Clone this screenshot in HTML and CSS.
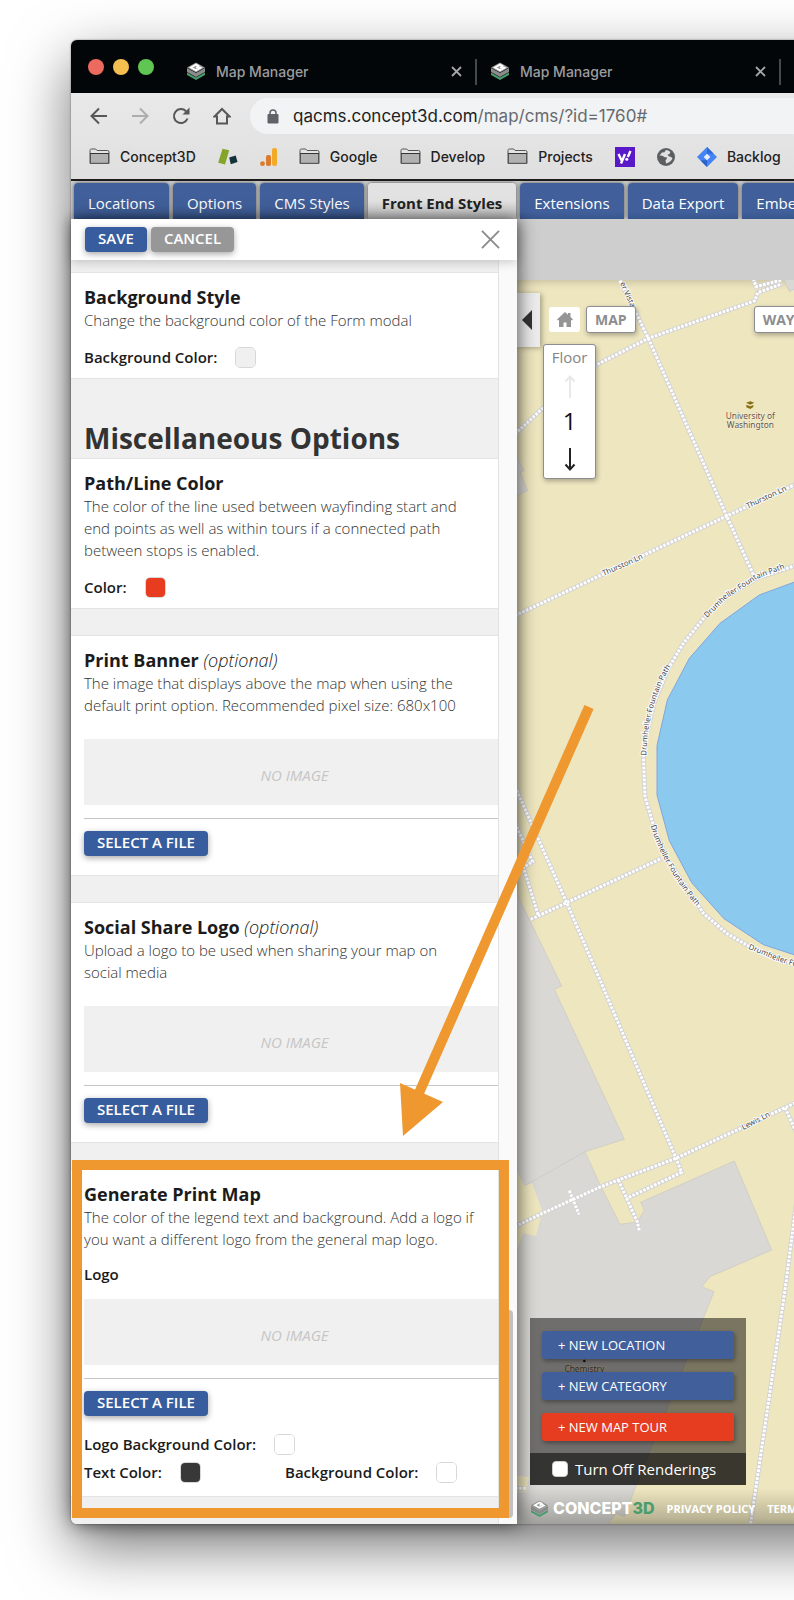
FILE: index.html
```html
<!DOCTYPE html>
<html lang="en">
<head>
<meta charset="utf-8">
<title>Map Manager</title>
<link rel="stylesheet" href="styles.css">
</head>
<body>
<svg class="defs" aria-hidden="true">
  <symbol id="stack" viewBox="0 0 20 18">
    <path d="M1 10.500l9 5 9-5v2.500l-9 5-9-5z" fill="#4a9c6d"/>
    <path d="M1 6l9 5 9-5v4l-9 5-9-5z" fill="#8a8c8c"/>
    <path d="M10 0.500l9 5-9 5-9-5z" fill="#8f9191"/>
    <path d="M13.200 4.400L10 2.700 5 5.500 10 8.300l4.500-2.500-2.300-1.200-2.200 1.200" fill="none" stroke="#fff" stroke-width="1.900"/>
  </symbol>
  <symbol id="cross" viewBox="0 0 20 20">
    <path d="M1 1l18 18M19 1L1 19" fill="none" stroke="currentColor" stroke-width="2"/>
  </symbol>
  <symbol id="cross-bold" viewBox="0 0 11 11">
    <path d="M1 1l9 9M10 1l-9 9" fill="none" stroke="currentColor" stroke-width="1.800"/>
  </symbol>
  <symbol id="folder" viewBox="0 0 21 17">
    <path d="M1 5V2.500q0-1.500 1.500-1.500h4.200l1.300 1.500h10.500q1.500 0 1.500 1.500v11.500H1z" fill="#e4e4e4" stroke="#555" stroke-width="1"/>
    <path d="M1.500 5.500h18v9.800h-18z" fill="#b1b1b1" stroke="#555" stroke-width="1"/>
    <path d="M1 5.500h19" stroke="#333" stroke-width="1"/>
  </symbol>
</svg>
<div class="desktop">
<div class="window">
  <header class="titlebar">
    <div class="lights"><span class="light red"></span><span class="light yellow"></span><span class="light green"></span></div>
    <div class="page-tab"><svg class="favicon"><use href="#stack"/></svg><span class="page-name">Map Manager</span><button class="tab-close" aria-label="Close tab"><svg class="tab-x"><use href="#cross-bold"/></svg></button></div>
    <div class="page-tab"><svg class="favicon"><use href="#stack"/></svg><span class="page-name">Map Manager</span><button class="tab-close" aria-label="Close tab"><svg class="tab-x"><use href="#cross-bold"/></svg></button></div>
  </header>
  <div class="chrome">
    <div class="toolbar">
      <button class="tool" aria-label="Back"><svg viewBox="0 0 18 18"><path d="M17 9H2M9 1.500L1.500 9 9 16.500" fill="none" stroke="#555759" stroke-width="2"/></svg></button>
      <button class="tool" aria-label="Forward"><svg viewBox="0 0 18 18"><path d="M1 9h15M9 1.500L16.500 9 9 16.500" fill="none" stroke="#acadae" stroke-width="2"/></svg></button>
      <button class="tool" aria-label="Reload"><svg viewBox="0 0 18 18"><path d="M15.500 11.500A7 7 0 1 1 14 4.200" fill="none" stroke="#555759" stroke-width="2"/><path d="M17.500 0.500v7h-7z" fill="#555759"/></svg></button>
      <button class="tool" aria-label="Home"><svg viewBox="0 0 18 18"><path d="M1.500 9.500L9 2l7.500 7.500H14V16.500H4V9.500z" fill="none" stroke="#555759" stroke-width="2"/></svg></button>
      <div class="address" role="textbox" aria-label="Address">
        <svg class="lock" viewBox="0 0 12 15"><path d="M1 5.500h10V14H1z" fill="#5f6368" stroke="#5f6368" stroke-linejoin="round"/><path d="M3 6V4a3 3 0 0 1 6 0v2" fill="none" stroke="#5f6368" stroke-width="1.500"/></svg>
        <span>qacms.concept3d.com<span class="url-path">/map/cms/?id=1760#</span></span>
      </div>
    </div>
    <nav class="bookmarks" aria-label="Bookmarks">
      <a class="bookmark" href="#"><svg class="folder"><use href="#folder"/></svg>Concept3D</a>
      <a class="bookmark" href="#" aria-label="Blocks"><svg width="20" height="18" viewBox="0 0 20 18"><path d="M4.500 0.700l6.700 1.600L7 16.500 0.200 14.800z" fill="#84a52a"/><path d="M11.200 9.600l6.500-2.200L19.500 14l-6.700 2.200z" fill="#14323c"/></svg></a>
      <a class="bookmark" href="#" aria-label="Analytics"><svg width="17" height="20" viewBox="0 0 17 20"><rect x="12" y="1" width="5" height="18" rx="2" fill="#f2ab28"/><rect x="6" y="8" width="5" height="11" rx="2" fill="#db7b2b"/><circle cx="2.500" cy="16.700" r="2.400" fill="#db7b2b"/></svg></a>
      <a class="bookmark" href="#"><svg class="folder"><use href="#folder"/></svg>Google</a>
      <a class="bookmark" href="#"><svg class="folder"><use href="#folder"/></svg>Develop</a>
      <a class="bookmark" href="#"><svg class="folder"><use href="#folder"/></svg>Projects</a>
      <a class="bookmark" href="#" aria-label="Yahoo"><svg width="20" height="20" viewBox="0 0 20 20"><path d="M0 0h20v20H0z" fill="#5a19c9"/><path d="M3.500 7l3 6.200M10 7l-4 9.500M15.500 4l-2.700 6" fill="none" stroke="#fff" stroke-width="2.400"/><circle cx="11.800" cy="12.300" r="1.500" fill="#fff"/></svg></a>
      <a class="bookmark" href="#" aria-label="Globe"><svg width="18" height="18" viewBox="0 0 18 18"><circle cx="9" cy="9" r="9" fill="#5c5f61"/><path d="M10 2q-2 0-2.500 2.200L5 4.500 2.500 7.500q4-.500 4.500 1.500l3 .500q0 2-1.500 2.500l.500 3.500q4.500-1 6.500-5-1.500-2.500-3.500-2l-1.500-2q3.500-.500 2.500-3z" fill="#e1e1e1"/></svg></a>
      <a class="bookmark" href="#"><svg width="20" height="20" viewBox="0 0 20 20"><path d="M10 0l10 10-10 10L0 10z" fill="#4584f5"/><path d="M10 13.300V20l-6.500-6.500z" fill="#2a62c9"/><path d="M10 6.800V0l6.500 6.500z" fill="#2f6bd6"/><path d="M10 6.700l3.300 3.300-3.300 3.300L6.700 10z" fill="#e9effa"/></svg>Backlog</a>
    </nav>
  </div>
  <nav class="sections" aria-label="Sections">
    <button class="section-tab">Locations</button>
    <button class="section-tab">Options</button>
    <button class="section-tab">CMS Styles</button>
    <button class="section-tab active">Front End Styles</button>
    <button class="section-tab">Extensions</button>
    <button class="section-tab">Data Export</button>
    <button class="section-tab">Embed</button>
  </nav>
  <div class="workspace">
    <main class="panel">
      <div class="panel-head">
        <button class="btn">SAVE</button>
        <button class="btn gray">CANCEL</button>
        <button class="panel-close" aria-label="Close panel"><svg><use href="#cross"/></svg></button>
      </div>
      <div class="panel-body">
        <div class="options">
          <section class="card">
            <h3>Background Style</h3>
            <p>Change the background color of the Form modal</p>
            <div class="field first"><label for="c1">Background Color:</label><input id="c1" type="color" value="#f0f0f0"></div>
          </section>
          <h2>Miscellaneous Options</h2>
          <section class="card">
            <h3>Path/Line Color</h3>
            <p>The color of the line used between wayfinding start and end points as well as within tours if a connected path between stops is enabled.</p>
            <div class="field first"><label for="c2">Color:</label><input id="c2" type="color" value="#e73c1f"></div>
          </section>
          <section class="card upload">
            <h3>Print Banner <em>(optional)</em></h3>
            <p>The image that displays above the map when using the default print option. Recommended pixel size: 680x100</p>
            <div class="preview">NO IMAGE</div>
            <hr>
            <button class="btn">SELECT A FILE</button>
          </section>
          <section class="card upload">
            <h3>Social Share Logo <em>(optional)</em></h3>
            <p>Upload a logo to be used when sharing your map on social media</p>
            <div class="preview">NO IMAGE</div>
            <hr>
            <button class="btn">SELECT A FILE</button>
          </section>
          <section class="card print">
            <h3>Generate Print Map</h3>
            <p>The color of the legend text and background. Add a logo if you want a different logo from the general map logo.</p>
            <h4>Logo</h4>
            <div class="preview">NO IMAGE</div>
            <hr>
            <button class="btn">SELECT A FILE</button>
            <div class="field after"><label for="c3">Logo Background Color:</label><input id="c3" type="color" value="#ffffff"></div>
            <div class="pair">
              <div class="field"><label for="c4">Text Color:</label><input id="c4" type="color" value="#383838"></div>
              <div class="field"><label for="c5">Background Color:</label><input id="c5" type="color" value="#ffffff"></div>
            </div>
          </section>
        </div>
        <div class="gutter"><span class="thumb"></span></div>
      </div>
    </main>
    <div class="map-pane">
      <div class="map">
        <svg class="map-art" role="img" aria-label="Campus map">
          <defs>
            <path id="ring" d="M580 1085L650 1015 740 957 860 912"/>
            <path id="ring2" d="M409 1487Q412 1340 480 1222L510 1170"/>
            <path id="ring3" d="M422 1697Q455 1810 552 1930L600 1985"/>
            <path id="ring4" d="M714 2066L800 2102 900 2132 1200 2132"/>
            <g id="paths">
              <path d="M330 62L415 235 650 768 735 955"/>
              <path d="M15 522L98 445 258 315 415 235 735 122 743 98 815 72M730 55L738 80 815 60"/>
              <path d="M15 1067L650 768 870 667"/>
              <path d="M870 912L740 955 650 1010 585 1070 520 1150 475 1225 435 1320 410 1420 400 1490 405 1610 430 1695 470 1795 555 1920 580 1960 650 2020 715 2058 870 2122"/>
              <path d="M15 1580L170 1928 270 2160 498 2695 515 2737 350 2815"/>
              <path d="M15 1690L68 1805 40 1822 85 1967M62 1978L170 1928 455 1795"/>
              <path d="M15 2900L97 2860 273 2780 325 2760 498 2695 825 2543 870 2522M825 2543L860 2620"/>
              <path d="M325 2760L350 2815 382 2886 388 2912M178 2792L207 2863"/>
              <path d="M860 2820L825 3090 722 3790M15 3685h32"/>
            </g>
          </defs>
          <g transform="translate(-7 -20) scale(.33333)">
            <g fill="#d9d8d4" stroke="#c9c7c3" stroke-width="2">
              <path d="M0 1860L155 2178 133 2188 343 2638 225 2675 273 2780 330 2893 382 2886 403 2850 392 2827 673 2703 785 2970 600 3050 575 3080 612 3095 375 3685 343 3770 318 3760 288 3800H0z"/>
              <path d="M0 555L42 632 30 637 53 692 0 716zM820 55L838 95 870 80V55z"/>
              <path d="M225 2675L43 2778" fill="none"/>
            </g>
            <path d="M0 2690L43 2778 65 2768 97 2852 78 2928 40 2920 0 3020zM0 3642L57 3652 48 3695H0z" fill="#eee6bf"/>
            <path d="M870 960L748 1005 630 1090 538 1195 472 1320 441 1457 441 1605 478 1742 545 1868 642 1976 760 2054 870 2090z" fill="#8bcaee" stroke="#7fa6e0" stroke-width="3"/>
            <use href="#paths" class="path-bed"/>
            <use href="#paths" class="path-dash"/>
            <g class="streets">
              <text transform="translate(330 70) rotate(66)">er Vista</text>
              <text transform="translate(281 948) rotate(-24)">Thurston Ln</text>
              <text transform="translate(713 746) rotate(-25)">Thurston Ln</text>
              <text transform="translate(700 2610) rotate(-27)">Lewis Ln</text>
              <text><textPath href="#ring" startOffset="16">Drumheller Fountain Path</textPath></text>
              <text><textPath href="#ring2">Drumheller Fountain Path</textPath></text>
              <text><textPath href="#ring3">Drumheller Fountain Path</textPath></text>
              <text><textPath href="#ring4">Drumheller Fountain Path</textPath></text>
            </g>
            <g class="places">
              <path d="M708 428l13-4 12 4-12 6zM709 434l12 5 9-4v6l-9 6-12-5z" fill="#8a7014"/>
              <text x="721" y="476">University of</text>
              <text x="721" y="505">Washington</text>
              <circle cx="223" cy="3303" r="4" fill="#3a1c10"/>
              <text x="223" y="3336">Chemistry</text>
            </g>
          </g>
        </svg>
        <button class="toggle" aria-label="Collapse panel"><svg width="10" height="20"><path d="M10 0v20L0 10z" fill="#333"/></svg></button>
        <div class="map-tools">
          <button class="home" aria-label="Home view"><svg width="16" height="15" viewBox="0 0 16 15"><path d="M8 0l3 2.700V1h2.500v4L16 7.500l-1 1-1-.800V15H9.500v-4.500h-3V15H2V7.700l-1 .800-1-1z" fill="#959595"/></svg></button>
          <button class="map-btn">MAP</button>
          <button class="map-btn way">WAYFINDING</button>
        </div>
        <div class="floor">
          <span>Floor</span>
          <button class="floor-step" aria-label="Floor up"><svg width="12" height="23"><path d="M6 23V2M1.500 6.500L6 1.500l4.500 5" fill="none" stroke="#e8e8e8" stroke-width="2"/></svg></button>
          <span class="floor-no">1</span>
          <button class="floor-step" aria-label="Floor down"><svg width="12" height="23"><path d="M6 0v21M1.500 16.500l4.500 5 4.500-5" fill="none" stroke="#222" stroke-width="2"/></svg></button>
        </div>
        <div class="actions">
          <div class="action-list">
            <button class="action">+ NEW LOCATION</button>
            <button class="action">+ NEW CATEGORY</button>
            <button class="action tour">+ NEW MAP TOUR</button>
          </div>
          <div class="render"><input type="checkbox" id="render"><label for="render">Turn Off Renderings</label></div>
        </div>
        <footer class="map-foot">
          <svg class="foot-icon"><use href="#stack"/></svg><span class="brand">CONCEPT<span class="brand-3d">3D</span></span>
          <a href="#">PRIVACY POLICY</a><a href="#">TERMS</a>
        </footer>
      </div>
    </div>
  </div>
  <svg class="notes" aria-hidden="true">
    <rect x="6" y="1125" width="427" height="348" fill="none" stroke="#ee982f" stroke-width="10"/>
    <path d="M518 667L348 1053" stroke="#ee982f" stroke-width="10"/>
    <path d="M329 1043l43 19-40 34z" fill="#ee982f"/>
  </svg>
</div>
</div>
</body>
</html>
```
FILE: styles.css
```css
* { box-sizing: border-box; }
body { margin: 0; background: #fff; font-family: "Open Sans", sans-serif; font-size: 15px; color: #1b1b1b; }
button { font: inherit; border: 0; padding: 0; background: none; cursor: pointer; }
a { color: inherit; text-decoration: none; }
h2, h3, h4, p, hr { margin: 0; }
svg { display: block; flex: none; }
.defs { position: absolute; width: 0; height: 0; }

.desktop { overflow: hidden; padding: 40px 0 76px 71px; }
.window { position: relative; margin-right: -120px; border-radius: 6px; background: #cecece; box-shadow: 0 0 2px rgba(0,0,0,.5), 0 22px 60px rgba(0,0,0,.55); }

.titlebar { display: flex; height: 53px; padding: 9px 0 0 17px; background: #030608; border-radius: 6px 6px 0 0; overflow: hidden; }
.lights { display: flex; gap: 9px; align-items: center; height: 36px; margin-right: 32px; flex: none; }
.light { width: 16px; height: 16px; border-radius: 50%; }
.red { background: #ec6a5e; }
.yellow { background: #f5bf4f; }
.green { background: #61c554; }
.page-tab { display: flex; align-items: center; flex: none; width: 304px; height: 44px; padding: 0 14px 0 0; position: relative; color: #9b9d9f; font-family: Inter, sans-serif; font-size: 14px; font-weight: 500; }
.page-tab::after { content: ""; position: absolute; right: 13px; top: 10px; width: 2px; height: 26px; background: #46484a; }
.favicon { width: 20px; height: 18px; margin-right: 10px; }
.page-name { flex: 1; }
.tab-close { margin-right: 14px; color: #a5a7a8; }
.tab-x { width: 11px; height: 11px; }

.chrome { background: linear-gradient(#e9e9e9, #dfdfdf); border-bottom: 2px solid #1c1c1c; }
.toolbar { display: flex; align-items: center; padding: 5px 0 0 19px; }
.tool { width: 18px; height: 18px; margin-right: 23px; }
.tool svg { width: 18px; height: 18px; }
.address { flex: 1; display: flex; align-items: center; gap: 14px; height: 36px; margin-left: -5px; padding-left: 17px; border-radius: 18px 0 0 18px; background: #f1f3f5; font-family: Inter, sans-serif; font-size: 17px; color: #202124; white-space: nowrap; }
.tool:nth-child(4) { margin-right: 24px; }
.lock { width: 12px; height: 15px; }
.url-path { color: #66696d; }
.bookmarks { display: flex; align-items: center; gap: 22px; height: 45px; padding-left: 18px; font-family: Inter, sans-serif; font-size: 14px; font-weight: 500; color: #222; overflow: hidden; }
.bookmark { display: flex; align-items: center; gap: 10px; flex: none; }
.folder { width: 21px; height: 17px; }

.sections { display: flex; gap: 4px; padding: 2px 0 0 3px; overflow: hidden; background: #cecece; }
.section-tab { flex: none; height: 36px; padding: 4px 14px 0; color: #fff; font-weight: 500; border-radius: 4px 4px 0 0; background: linear-gradient(#41609b 80%, #38568d); box-shadow: 0 0 4px rgba(0,0,0,.6); }
.section-tab.active { color: #222; font-weight: 700; background: linear-gradient(#e2e2e2 50%, #c4c4c4); }

.workspace { display: flex; align-items: stretch; }
.panel { position: relative; z-index: 1; flex: none; width: 446px; background: #fff; border-radius: 0 0 0 6px; box-shadow: 2px 0 18px rgba(0,0,0,.6); }
.panel-head { position: relative; z-index: 1; display: flex; align-items: center; gap: 4px; height: 41px; padding: 0 17px 1px 14px; background: #fff; box-shadow: 0 2px 10px rgba(0,0,0,.2); }
.btn { height: 25px; padding: 0 13px 2px; border-radius: 4px; background: #385d9f; color: #fff; line-height: 23px; font-weight: 600; box-shadow: 0 2px 6px rgba(0,0,0,.35); }
.btn.gray { background: #979797; }
.panel-close { margin-left: auto; color: #8c8c8c; }
.panel-close svg { width: 19px; height: 19px; }
.panel-body { display: flex; }
.options { flex: 1; min-width: 0; padding: 12px 0 27px; display: flex; flex-direction: column; gap: 26px; background: #f0f0f0; border-radius: 0 0 0 6px; }
.card { padding: 12px 0 10px 13px; background: #fff; border: solid #e4e4e4; border-width: 1px 0; }
h2 { height: 53px; margin-bottom: -26px; padding-left: 13px; font-size: 28px; line-height: 66px; color: #333; }
h3 { font-size: 18px; line-height: 24px; font-weight: 700; }
h3 em { font-weight: 300; }
p { padding-right: 22px; line-height: 22px; font-weight: 300; color: #333; }
h4 { margin-top: 13px; font-size: 15px; line-height: 22px; font-weight: 600; }
.field { display: flex; align-items: center; gap: 18px; height: 22px; font-weight: 600; }
.first { margin-top: 15px; }
.after { margin-top: 17px; }
input[type="color"] { appearance: none; width: 21px; height: 21px; padding: 0; border: 1px solid #d8d8d8; border-radius: 5px; background: none; overflow: hidden; }
input[type="color"]::-webkit-color-swatch-wrapper { padding: 0; }
input[type="color"]::-webkit-color-swatch { border: 0; }
.upload { padding-bottom: 19px; }
.preview { display: flex; align-items: center; justify-content: center; height: 66px; margin-top: 23px; padding: 6px 0 0 7px; background: #f0f0f0; color: #c6c6c6; font-style: italic; }
hr { margin: 13px 0 12px; height: 1px; border: 0; background: #c4c4c6; }
.print { padding-bottom: 13px; }
.print .preview { margin-top: 14px; }
.pair { display: grid; grid-template-columns: 201px 1fr; margin-top: 6px; }
.gutter { position: relative; width: 19px; background: #fafafa; border-left: 1px solid #e2e2e2; }
.thumb { position: absolute; right: 4px; bottom: 6px; width: 8px; height: 208px; border-radius: 4px; background: #c1c1c1; }

.map-pane { flex: 1; display: flex; padding-top: 61px; background: #cecece; overflow: hidden; }
.map { position: relative; flex: 1; background: #eee6bf; overflow: hidden; box-shadow: inset 0 2px 8px rgba(0,0,0,.18); }
.map-art { position: absolute; inset: 0; width: 100%; height: 100%; }
.path-bed { fill: none; stroke: #d3d2d3; stroke-width: 14; }
.path-dash { fill: none; stroke: #fff; stroke-width: 9; stroke-dasharray: 8 4; }
.streets text { font-family: "Noto Sans", sans-serif; font-size: 23px; fill: #444; stroke: #fff; stroke-width: 5; paint-order: stroke; }
.places text { font-family: "Noto Sans", sans-serif; font-size: 25px; text-anchor: middle; fill: #665544; stroke: #f5f0dc; stroke-width: 3; paint-order: stroke; }
.toggle { position: absolute; left: 0; top: 13px; width: 23px; height: 54px; padding-left: 5px; background: #ececec; box-shadow: 2px 1px 5px rgba(0,0,0,.3); }
.map-tools { position: absolute; left: 32px; top: 26px; display: flex; align-items: center; gap: 6px; }
.home { display: flex; align-items: center; justify-content: center; width: 31px; height: 25px; border-radius: 3px; background: #fff; }
.map-btn { height: 27px; padding: 0 8px; border: 1px solid #8d8d93; border-radius: 3px; background: #fff; color: #8d8d8d; font-size: 14px; line-height: 25px; font-weight: 700; box-shadow: 1px 2px 5px rgba(0,0,0,.3); }
.way { margin-left: 112px; }
.floor { position: absolute; left: 26px; top: 64px; width: 53px; display: flex; flex-direction: column; align-items: center; padding: 1px 0 7px; border: 1px solid #8d8d93; border-radius: 3px; background: #fff; color: #858585; line-height: 22px; box-shadow: 1px 2px 5px rgba(0,0,0,.3); }
.floor-step { height: 24px; margin-top: 6px; }
.floor-no { margin-top: 5px; height: 38px; font-size: 24px; line-height: 35px; color: #111; }
.actions { position: absolute; left: 13px; bottom: 39px; width: 216px; }
.action-list { display: flex; flex-direction: column; gap: 13px; padding: 13px 12px 12px; background: rgba(0,0,0,.49); }
.action { height: 28px; padding-left: 16px; border-radius: 3px; background: #41609b; color: #fff; font-size: 13px; text-align: left; box-shadow: 1px 2px 4px rgba(0,0,0,.35); }
.action.tour { background: #e63c20; }
.render { display: flex; align-items: center; gap: 7px; height: 32px; padding-left: 22px; background: rgba(0,0,0,.76); color: #fff; white-space: nowrap; }
.render input { appearance: none; width: 16px; height: 16px; margin: 0; border-radius: 4px; background: #fff; border: 1px solid #ccc; }
.map-foot { position: absolute; left: 0; right: 0; bottom: 0; display: flex; align-items: center; height: 36px; padding: 4px 0 0 13px; background: linear-gradient(rgba(0,0,0,0), rgba(0,0,0,.26)); color: #fff; font-size: 11px; font-weight: 700; white-space: nowrap; }
.foot-icon { width: 19px; height: 17px; margin-right: 4px; }
.brand { font-family: Inter, sans-serif; font-size: 16px; font-weight: 800; }
.brand-3d { color: #4a9c6d; }
.map-foot a { margin-left: 12px; }
.notes { position: absolute; z-index: 2; left: 0; top: 0; width: 100%; height: 100%; pointer-events: none; }
```
